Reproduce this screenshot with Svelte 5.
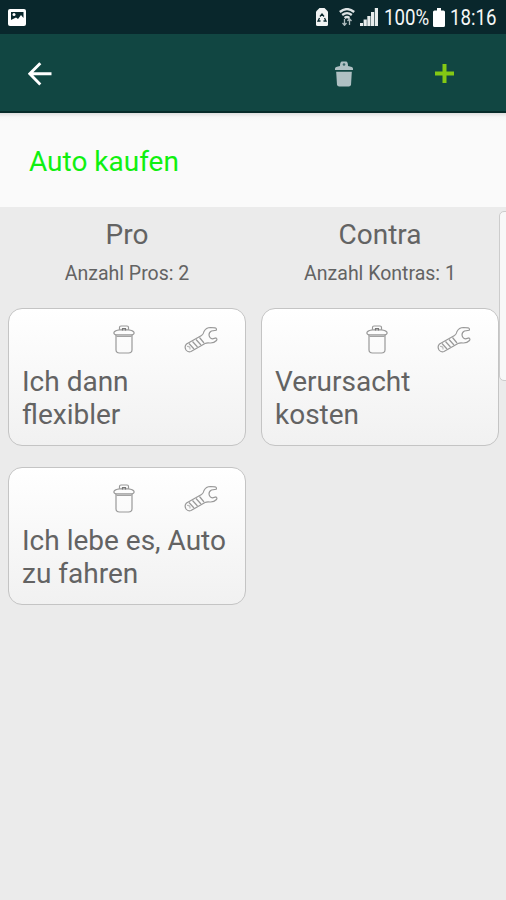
<script lang="ts">
  interface Item {
    id: number;
    text: string;
  }

  interface Column {
    title: string;
    label: string;
    items: Item[];
  }

  const topic = 'Auto kaufen';

  let columns = $state<Column[]>([
    {
      title: 'Pro',
      label: 'Anzahl Pros',
      items: [
        { id: 1, text: 'Ich dann flexibler' },
        { id: 2, text: 'Ich lebe es, Auto zu fahren' },
      ],
    },
    {
      title: 'Contra',
      label: 'Anzahl Kontras',
      items: [{ id: 3, text: 'Verursacht kosten' }],
    },
  ]);

  function remove(column: Column, id: number) {
    column.items = column.items.filter((i) => i.id !== id);
  }

  function clear() {
    for (const column of columns) column.items = [];
  }
</script>

<div class="screen">
  <div class="status">
    <svg class="photo" width="18" height="17" viewBox="0 0 18 17">
      <rect x="0" y="0" width="18" height="17" rx="2" fill="#fff" />
      <path d="M3 3h12.500v6l-2.500-3-3 4-2-1.500L3 11z" fill="#09272c" />
      <circle cx="6" cy="5.500" r="1.500" fill="#fff" />
    </svg>
    <div class="indicators">
      <svg width="12" height="18" viewBox="0 0 12 18">
        <path d="M3.500 0h5L12 3.500V16.500q0 1.500-1.500 1.500h-9Q0 18 0 16.500V3.500z" fill="#f1f4f4" />
        <path d="M4 8.500l2-2.500 2 2.500M3.500 10L2 13h2.500M8.500 10l1.500 3H7.500" fill="none" stroke="#09272c" stroke-width="1.300" />
      </svg>
      <svg class="wifi" width="16" height="18" viewBox="0 0 16 18">
        <g fill="none" stroke="#dde3e4" stroke-width="2.300">
          <path d="M.8 4Q8-1.800 15.200 4" />
          <path d="M3.200 7Q8 3.200 12.800 7" />
          <path d="M5.600 10Q8 8 10.400 10" />
        </g>
        <path d="M5.500 11v6M3.500 15l2 2.300L7.500 15M10.500 17v-6M8.500 13l2-2.300 2 2.300" fill="none" stroke="#aebbbd" stroke-width="1.300" />
      </svg>
      <svg class="signal" width="18" height="18" viewBox="0 0 18 18" fill="#e9eded">
        <rect x="0" y="15" width="3" height="3" />
        <rect x="3.600" y="11.500" width="3.200" height="6.500" />
        <rect x="7.300" y="8" width="3.200" height="10" />
        <rect x="11" y="4" width="3.200" height="14" />
        <rect x="14.800" y="0" width="3.200" height="18" />
      </svg>
      <span class="percent">100%</span>
      <svg class="battery" width="12" height="19" viewBox="0 0 12 19">
        <path d="M4 0h4v2.500h2.500Q12 2.500 12 4v13.500q0 1.500-1.500 1.500h-9Q0 19 0 17.500V4q0-1.500 1.500-1.500H4z" fill="#fff" />
      </svg>
      <span class="time">18:16</span>
    </div>
  </div>

  <header>
    <button type="button" class="back" aria-label="Zurück">
      <svg width="24" height="24" viewBox="0 0 24 24" fill="none" stroke="#fff" stroke-width="2.900">
        <path d="M12.300 1.200L1.800 11.800l10.500 10.600M2 11.800h21.500" />
      </svg>
    </button>
    <button type="button" class="clear" aria-label="Alle löschen" onclick={clear}>
      <svg width="18" height="26" viewBox="0 0 18 26" fill="#afc0c3">
        <path d="M0 9V7.500Q.3 6 2 5.700l3-.7Q5 .5 7 .5h4q2 0 2 4.500l3 .7q1.700.3 2 1.800V9z" />
        <path d="M1.200 10.800h15.600l-.8 12.700q-.2 2-2.200 2H4.200q-2 0-2.200-2z" />
        <circle cx="9" cy="3.500" r="1.300" fill="#3b6668" />
      </svg>
    </button>
    <button type="button" class="add" aria-label="Hinzufügen">
      <svg width="19" height="19" viewBox="0 0 19 19">
        <path d="M9.500 0v19M0 9.500h19" stroke="#84c814" stroke-width="4" />
      </svg>
    </button>
  </header>

  <h1>{topic}</h1>

  <main>
    {#each columns as column}
      <section>
        <h2>{column.title}</h2>
        <p class="count">{column.label}: {column.items.length}</p>
        {#each column.items as item (item.id)}
          <article>
            <div class="actions">
              <button type="button" aria-label="Löschen" onclick={() => remove(column, item.id)}>
                <svg width="22" height="29" viewBox="0 0 22 29" fill="none" stroke="#999" stroke-width="1.200">
                  <path d="M6.500 4.800V2.500q0-1.500 1.500-1.500h6q1.500 0 1.500 1.500v2.300" />
                  <path d="M6.500 4.800Q2 5.300 1 7.300.5 9.300 3 9.800h16q2.500-.5 2-2.500-1-2-5.500-2.500z" />
                  <path d="M3 9.800v15q0 3.200 3.500 3.200h9q3.500 0 3.500-3.200v-15" />
                  <path d="M3.500 11.300h15" />
                  <path d="M9.500 5.500V3.500h3v2" stroke="#777" />
                </svg>
              </button>
              <button type="button" aria-label="Bearbeiten">
                <svg width="34" height="27" viewBox="0 0 34 27" fill="none" stroke="#999" stroke-width="1.200">
                  <path d="M2.500 18L17.500 9.500Q19.500 8 20 5.500 22 1.500 26.500 1.500l4.500.3q2 .7 1.200 2.500l-4.700.7q-2.500 1.200-2.500 4 .5 3.500 3.500 3.800l3.500-.8q1.500.8.500 2.500-2.500 2.700-6.500 2.500-3-.5-5 .5L7 25.500q-3 1-5-1.500-2-3.500.5-6z" />
                  <path d="M5 17.500l5 5.500M8.500 15.500l5 5.500M12 13.500l5 5.500M15.500 11.500l4.500 5.500" />
                  <path d="M3 20.500q3.500-.5 3 3" stroke="#bbb" />
                </svg>
              </button>
            </div>
            <p class="text">{item.text}</p>
          </article>
        {/each}
      </section>
    {/each}
  </main>

  <!-- edge panel handle -->
  <div class="edge"></div>
</div>

<style>
  :global(body) {
    background: #ebebeb;
  }
  .screen {
    position: relative;
    display: flex;
    flex-direction: column;
    height: 900px;
    overflow: hidden;
    background: #ebebeb;
    color: #636363;
    font-family: Roboto, sans-serif;
  }
  svg {
    display: block;
  }
  button {
    padding: 0;
    border: none;
    background: none;
    cursor: pointer;
  }
  h1, h2, p {
    margin: 0;
    font-weight: 400;
  }
  .status {
    display: flex;
    align-items: center;
    justify-content: space-between;
    box-sizing: border-box;
    height: 34px;
    padding: 0 9px 0 8px;
    background: #09272c;
    color: #f4f6f6;
  }
  .indicators {
    display: flex;
    align-items: center;
    font-size: 22px;
    line-height: 34px;
  }
  .wifi { margin-left: 11px; }
  .signal { margin-left: 5px; }
  .percent {
    width: 49px;
    margin: 2px 0 0 6px;
  }
  .time {
    width: 47px;
    margin: 2px 0 0 5px;
  }
  /* condensed digits */
  .percent, .time {
    display: block;
    white-space: nowrap;
    transform: scaleX(0.85);
    transform-origin: left;
  }
  header {
    display: flex;
    align-items: center;
    box-sizing: border-box;
    height: 79px;
    padding: 2px 52px 0 28px;
    background: #114642;
    border-bottom: 2px solid #062b29;
  }
  .clear {
    margin-left: auto;
    margin-right: 82px;
  }
  h1 {
    box-sizing: border-box;
    height: 94px;
    padding-left: 29px;
    background: linear-gradient(#dedede, #f6f6f6 4px, #fafafa 8px);
    color: #10f010;
    font-size: 28px;
    line-height: 97px;
  }
  main {
    display: grid;
    grid-template-columns: 1fr 1fr;
  }
  section {
    display: flex;
    flex-direction: column;
    padding: 11px 7px 0 8px;
  }
  h2 {
    font-size: 28px;
    line-height: 34px;
    text-align: center;
  }
  .count {
    height: 56px;
    font-size: 19.500px;
    line-height: 43px;
    text-align: center;
  }
  article {
    box-sizing: border-box;
    height: 138px;
    margin-bottom: 21px;
    padding: 15px 13px 0;
    border: 1px solid #c4c4c4;
    border-radius: 14px;
    background: linear-gradient(#fff, #f1f1f1);
  }
  .actions {
    display: flex;
    align-items: center;
    justify-content: flex-end;
    gap: 49px;
    height: 30px;
    padding-right: 14px;
  }
  .text {
    margin-top: 11px;
    font-size: 28px;
    line-height: 33px;
  }
  .edge {
    position: absolute;
    top: 211px;
    right: -6px;
    width: 11px;
    height: 168px;
    border: 1px solid #ccc;
    border-radius: 5px;
    background: #f8f8f8;
  }
</style>
